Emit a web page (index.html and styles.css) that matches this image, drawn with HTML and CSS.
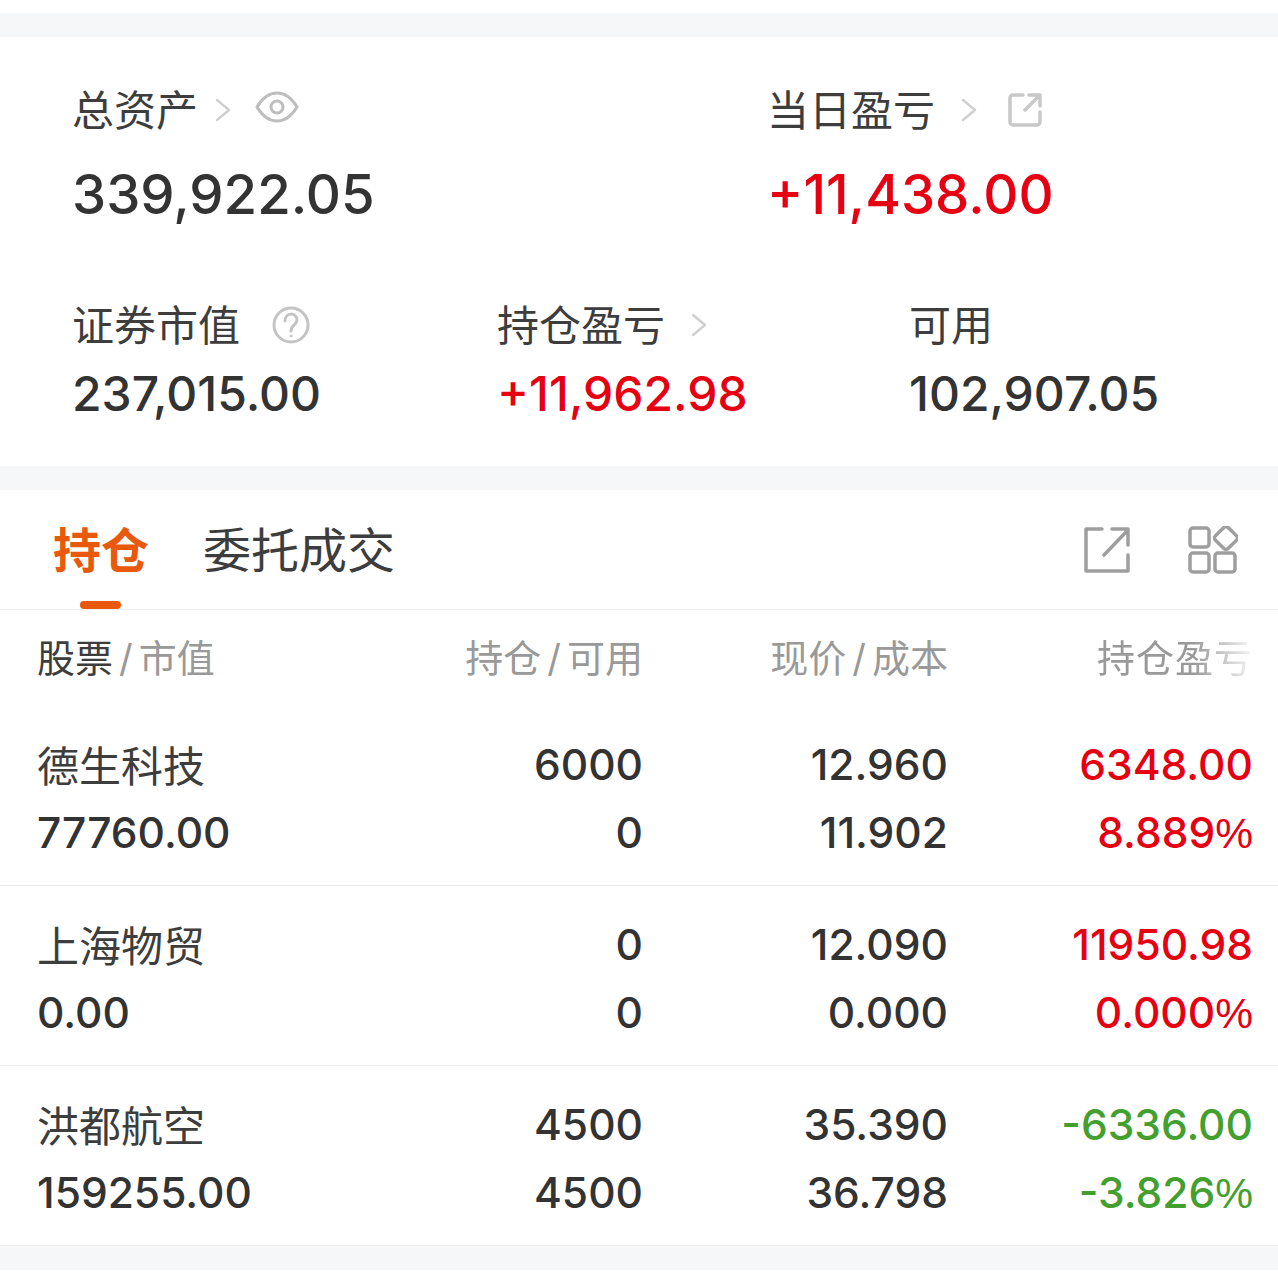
FILE: index.html
```html
<!DOCTYPE html>
<html lang="zh-CN">
<head>
  <meta charset="UTF-8">
  <meta name="viewport" content="width=device-width, initial-scale=1.0">
  <title>持仓</title>
  <link rel="stylesheet" href="styles.css">
</head>
<body>

  <div class="gap first"></div>

  <!-- 资产汇总 -->
  <section class="summary">
    <div class="summary-top">
      <div class="item">
        <div class="label">总资产
          <svg class="chev" viewBox="0 0 16 24"><path d="M2 2l12 10L2 22"/></svg>
          <svg class="eye" viewBox="0 0 44 32"><path d="M2 16C8 6 15 2 22 2s14 4 20 14c-6 10-13 14-20 14S8 26 2 16z"/><circle cx="22" cy="16" r="6"/></svg>
        </div>
        <div class="value big">339,922.05</div>
      </div>
      <div class="item">
        <div class="label">当日盈亏
          <svg class="chev wide" viewBox="0 0 16 24"><path d="M2 2l12 10L2 22"/></svg>
          <svg class="share-sm" viewBox="0 0 34 34"><path d="M15 2H5a3 3 0 0 0-3 3v24a3 3 0 0 0 3 3h24a3 3 0 0 0 3-3V19M17 17L32 2M21 2h11v11"/></svg>
        </div>
        <div class="value big red">+11,438.00</div>
      </div>
    </div>
    <div class="summary-bottom">
      <div class="item">
        <div class="label">证券市值
          <svg class="help" viewBox="0 0 38 38"><circle cx="19" cy="19" r="17"/><path d="M13 15c0-9 12-9 12-1 0 5-6 5-6 11"/><circle class="dot" cx="19" cy="30" r="1"/></svg>
        </div>
        <div class="value">237,015.00</div>
      </div>
      <div class="item">
        <div class="label">持仓盈亏
          <svg class="chev wide" viewBox="0 0 16 24"><path d="M2 2l12 10L2 22"/></svg>
        </div>
        <div class="value red">+11,962.98</div>
      </div>
      <div class="item">
        <div class="label">可用</div>
        <div class="value">102,907.05</div>
      </div>
    </div>
  </section>

  <div class="gap"></div>

  <!-- 持仓列表 -->
  <section class="holdings">
    <div class="tabs">
      <div class="tab active">持仓</div>
      <div class="tab">委托成交</div>
      <div class="tab-icons">
        <svg class="share" viewBox="0 0 46 46"><path d="M18 2H2v42h42V28M20 28L44 3M28 2h16v16"/></svg>
        <svg class="apps" viewBox="0 0 50 48"><rect x="2" y="2" width="19" height="19" rx="3"/><rect transform="rotate(45 38 12)" x="29" y="3" width="18" height="18" rx="3"/><rect x="2" y="27" width="19" height="19" rx="3"/><rect x="27" y="27" width="20" height="19" rx="3"/></svg>
      </div>
    </div>

    <div class="row head">
      <div><span class="dark">股票</span><i>/</i>市值</div>
      <div class="num">持仓<i>/</i>可用</div>
      <div class="num">现价<i>/</i>成本</div>
      <div class="num fade">持仓盈亏</div>
    </div>

    <div class="row stock">
      <div class="name">德生科技</div>
      <div class="num">6000</div>
      <div class="num">12.960</div>
      <div class="num red">6348.00</div>
      <div>77760.00</div>
      <div class="num">0</div>
      <div class="num">11.902</div>
      <div class="num red">8.889<span class="pct">%</span></div>
    </div>
    <div class="row stock">
      <div class="name">上海物贸</div>
      <div class="num">0</div>
      <div class="num">12.090</div>
      <div class="num red">11950.98</div>
      <div>0.00</div>
      <div class="num">0</div>
      <div class="num">0.000</div>
      <div class="num red">0.000<span class="pct">%</span></div>
    </div>
    <div class="row stock">
      <div class="name">洪都航空</div>
      <div class="num">4500</div>
      <div class="num">35.390</div>
      <div class="num green">-6336.00</div>
      <div>159255.00</div>
      <div class="num">4500</div>
      <div class="num">36.798</div>
      <div class="num green">-3.826<span class="pct">%</span></div>
    </div>
  </section>

  <div class="gap"></div>

</body>
</html>
```

FILE: styles.css
```css
* { box-sizing: border-box; }
body {
  margin: 0;
  background: #fff;
  color: #333;
  font-family: "Inter", "Noto Sans CJK SC", sans-serif;
}
svg { fill: none; stroke-linecap: round; stroke-linejoin: round; }
.gap { height: 24px; background: #f6f7f9; }
.gap.first { margin-top: 13px; }
.red { color: #e60012; }
.green { color: #43a02f; }

/* 资产汇总 */
.summary { height: 429px; padding: 42px 0 0 72px; }
.summary-top { display: grid; grid-template-columns: 695px 1fr; }
.summary-bottom { display: grid; grid-template-columns: 425px 412px 1fr; margin-top: 64px; }
.label {
  display: flex;
  align-items: center;
  height: 56px;
  font-size: 42px;
  color: #3d3d3d;
}
.value { font-size: 48px; font-weight: 500; line-height: 64px; margin-top: 12px; }
.value.big { font-size: 54.5px; line-height: 72px; margin-top: 23px; }
.chev { width: 16px; height: 24px; margin: 5px 0 0 17px; stroke: #d0d0d0; stroke-width: 2.5; }
.chev.wide { margin-left: 26px; }
.eye { width: 44px; height: 32px; margin-left: 24px; stroke: #bdbdbd; stroke-width: 3; }
.share-sm { width: 34px; height: 34px; margin: 6px 0 0 31px; stroke: #c8c8c8; stroke-width: 3.5; }
.help { width: 38px; height: 38px; margin: 6px 0 0 32px; stroke: #c4c4c4; stroke-width: 3; }
.help .dot { fill: #c4c4c4; stroke-width: 1; }

/* 标签栏 */
.tabs {
  display: flex;
  align-items: center;
  height: 120px;
  padding: 0 40px 0 53px;
  border-bottom: 1px solid #efefef;
  font-size: 48px;
  line-height: 60px;
  color: #3d3d3d;
}
.tab { position: relative; margin-right: 54px; top: 1px; }
.tab.active { color: #e8590c; font-weight: bold; }
.tab.active::after {
  content: "";
  position: absolute;
  left: 27px;
  bottom: -28px;
  width: 41px;
  height: 8px;
  border-radius: 4px;
  background: #e8590c;
}
.tab-icons { display: flex; align-items: center; gap: 58px; margin-left: auto; }
.share { width: 46px; height: 46px; stroke: #9e9e9e; stroke-width: 3.5; }
.apps { width: 50px; height: 48px; stroke: #9e9e9e; stroke-width: 3.5; }

/* 表格 */
.row {
  display: grid;
  grid-template-columns: 301px 305px 305px 305px;
  padding: 0 25px 0 37px;
}
.num { text-align: right; }
.head { height: 96px; padding-top: 23px; font-size: 38px; line-height: 50px; color: #999; }
.head i { margin: 0 6px; font-style: normal; }
.head .dark { color: #3d3d3d; }
.fade {
  white-space: nowrap;
  letter-spacing: 1px;
  mask-image: linear-gradient(to left, rgba(0,0,0,.1) 0, #000 60px);
}
.stock {
  height: 180px;
  align-content: center;
  padding-top: 7px;
  font-size: 42.5px;
  font-weight: 500;
  line-height: 68px;
  border-bottom: 1px solid #efefef;
}
.name { align-self: end; font-size: 42px; font-weight: 400; line-height: 64px; color: #3d3d3d; }
.pct { font-family: "Liberation Sans", sans-serif; }
```
